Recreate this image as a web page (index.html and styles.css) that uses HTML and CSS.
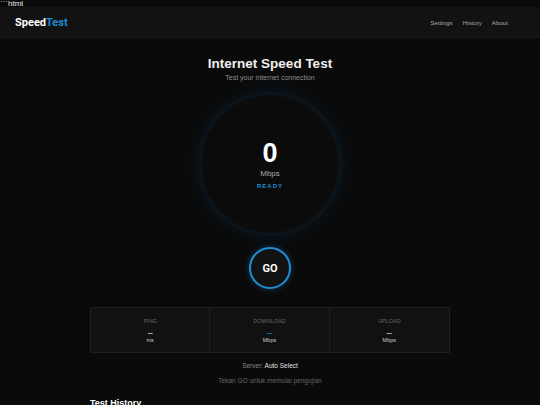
FILE: index.html
```html
<!DOCTYPE html>
<html lang="id">
<head>
  <meta charset="UTF-8">
  <title>SpeedTest</title>
  <link rel="stylesheet" href="styles.css">
</head>
<body>
```html
  <header class="navbar">
    <div class="logo">Speed<span>Test</span></div>
    <nav class="nav-links">
      <a href="#">Settings</a>
      <a href="#">History</a>
      <a href="#">About</a>
    </nav>
  </header>

  <main class="container">
    <h1 class="title">Internet Speed Test</h1>
    <p class="subtitle">Test your internet connection</p>

    <!-- gauge -->
    <div class="gauge">
      <div class="speed-value">0</div>
      <div class="speed-unit">Mbps</div>
      <div class="status">READY</div>
    </div>

    <button class="go-btn">GO</button>

    <!-- hasil -->
    <div class="stats">
      <div class="stat">
        <div class="stat-label">PING</div>
        <div class="stat-value">--</div>
        <div class="stat-unit">ms</div>
      </div>
      <div class="stat">
        <div class="stat-label">DOWNLOAD</div>
        <div class="stat-value blue">--</div>
        <div class="stat-unit">Mbps</div>
      </div>
      <div class="stat">
        <div class="stat-label">UPLOAD</div>
        <div class="stat-value">--</div>
        <div class="stat-unit">Mbps</div>
      </div>
    </div>

    <div class="server">Server: <span>Auto Select</span></div>
    <div class="hint">Tekan GO untuk memulai pengujian</div>

    <section class="history">
      <h2>Test History</h2>
    </section>
  </main>
</body>
</html>
```

FILE: styles.css
```css
/* global */
body {
  margin: 0;
  padding: 0;
  font-family: "Liberation Sans", Arial, sans-serif;
  background: #0a0a0a;
  color: #e6e6e6;
  font-size: 8px;
  line-height: 7px;
  height: 405px;
  overflow: hidden;
}

/* navbar */
.navbar {
  display: flex;
  align-items: center;
  justify-content: space-between;
  height: 30px;
  padding: 0 32px 0 15px;
  background: #121212;
  border-bottom: 1px solid #1a1a1a;
}
.logo {
  font-family: Roboto, "Liberation Sans", sans-serif;
  font-weight: 700;
  font-size: 11px;
  color: #fff;
}
.logo span {
  color: #1e8fd6;
}
.nav-links {
  display: flex;
  gap: 10px;
}
.nav-links a {
  color: #a8a8a8;
  font-size: 6.2px;
  text-decoration: none;
}

/* main */
.container {
  width: 360px;
  margin: 0 auto;
  display: flex;
  flex-direction: column;
  align-items: center;
}
.title {
  margin: 18px 0 0;
  font-size: 13.5px;
  line-height: 16px;
  font-weight: 700;
  color: #f0f0f0;
}
.subtitle {
  margin: 1px 0 0;
  font-size: 7px;
  line-height: 9px;
  color: #8a8a8a;
}

/* gauge */
.gauge {
  margin-top: 12px;
  width: 140px;
  height: 140px;
  border-radius: 50%;
  background: #0b0b0c;
  border: 1px solid #0e151b;
  box-sizing: border-box;
  box-shadow: 0 0 20px rgba(30,130,200,0.15), 0 0 5px rgba(30,130,200,0.1), inset 0 0 8px rgba(30,130,200,0.05);
  display: flex;
  flex-direction: column;
  align-items: center;
  justify-content: center;
}
.speed-value {
  font-size: 27px;
  line-height: 28px;
  font-weight: 700;
  color: #fff;
}
.speed-unit {
  margin-top: 2px;
  font-size: 8px;
  line-height: 9px;
  color: #aaa;
}
.status {
  margin-top: 4px;
  font-size: 6px;
  line-height: 8px;
  font-weight: 700;
  letter-spacing: 1px;
  color: #1e8fd6;
}

/* GO */
.go-btn {
  margin-top: 13px;
  width: 42px;
  height: 42px;
  border-radius: 50%;
  border: 2px solid #1e8fd6;
  background: #121212;
  color: #fff;
  font-family: Roboto, "Liberation Sans", sans-serif;
  font-weight: 700;
  font-size: 11px;
  box-shadow: 0 0 6px rgba(30,140,210,0.35);
  padding: 0;
}

/* stats */
.stats {
  margin-top: 18px;
  width: 360px;
  display: grid;
  grid-template-columns: 1fr 1fr 1fr;
  background: #111;
  border: 1px solid #1f1f1f;
  box-sizing: border-box;
}
.stat {
  height: 44px;
  display: flex;
  flex-direction: column;
  align-items: center;
  padding-top: 10px;
  box-sizing: border-box;
  border-right: 1px solid #1f1f1f;
}
.stat:last-child {
  border-right: none;
}
.stat-label {
  font-size: 5.5px;
  color: #6a6a6a;
  line-height: 6px;
}
.stat-value {
  margin-top: 6px;
  font-size: 7.5px;
  font-weight: 700;
  line-height: 6px;
  color: #ddd;
}
.stat-value.blue {
  color: #1e8fd6;
}
.stat-unit {
  margin-top: 1px;
  font-size: 5.5px;
  line-height: 7px;
  color: #ccc;
}

.server {
  margin-top: 9px;
  font-size: 6.5px;
  line-height: 8px;
  color: #888;
}
.server span {
  color: #e0e0e0;
}
.hint {
  margin-top: 7px;
  font-size: 6.5px;
  line-height: 8px;
  color: #666;
}

.history {
  align-self: stretch;
  margin-top: 13px;
}
.history h2 {
  margin: 0;
  font-size: 9px;
  line-height: 10px;
  color: #fff;
}
```
